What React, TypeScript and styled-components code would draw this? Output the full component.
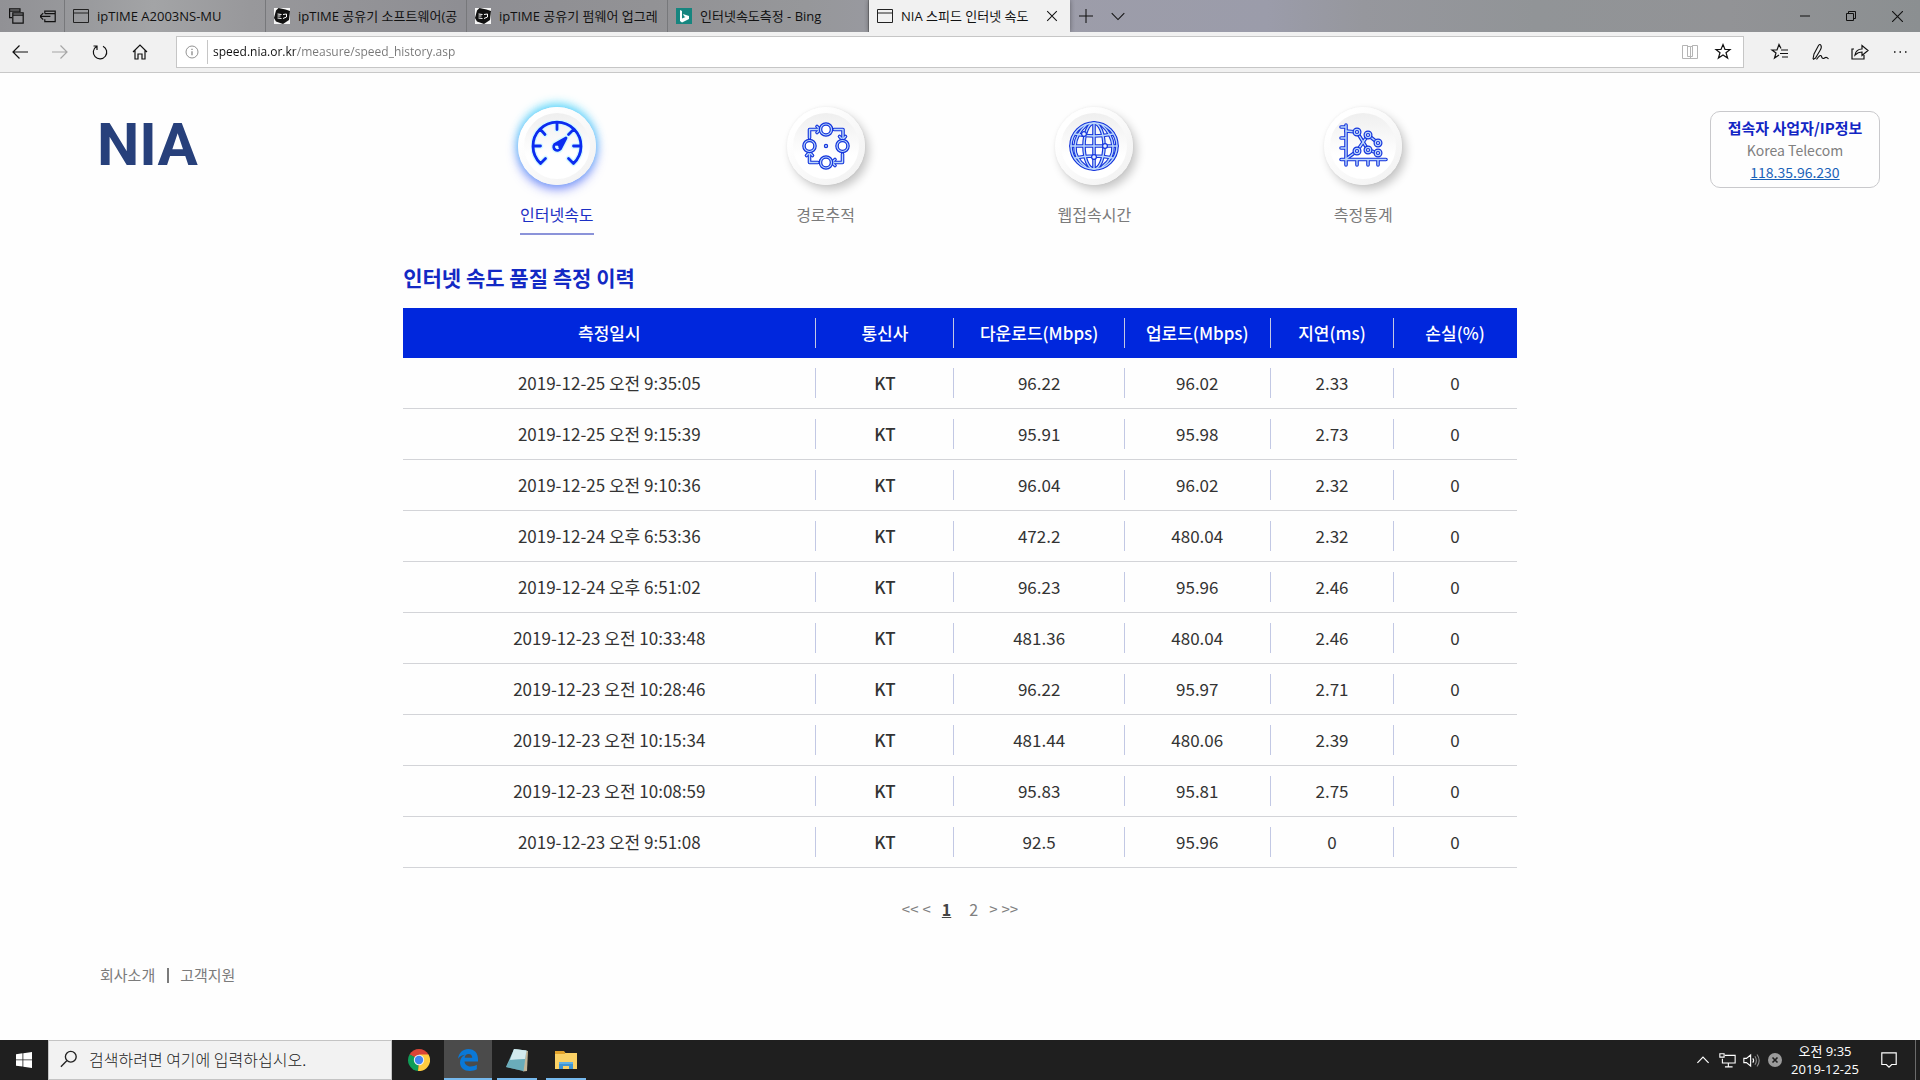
import React from "react";
import styled, { createGlobalStyle, css } from "styled-components";

const uiFont = `"Open Sans", "Noto Sans CJK KR", sans-serif`;
const pageFont = `"Noto Sans CJK KR", "Noto Sans", sans-serif`;

const GlobalStyle = createGlobalStyle`
  *, *::before, *::after { box-sizing: border-box; }
  body { margin: 0; background: #fefefe; font-family: ${pageFont}; }
  button { font: inherit; color: inherit; background: none; border: 0; padding: 0; }
  a { color: inherit; text-decoration: none; }
  svg { display: block; flex: none; }
`;

const Screen = styled.div`
  min-height: 100vh;
  display: flex;
  flex-direction: column;
`;

/* ---------- browser chrome ---------- */

const TabStrip = styled.div`
  height: 32px;
  display: flex;
  align-items: stretch;
  font-family: ${uiFont};
  font-size: 13px;
  color: #111;
  background: linear-gradient(
    90deg,
    #919195 0%, #98999c 4%, #a3a4a6 8%, #98989b 13%, #8e8e93 24%,
    #929295 34%, #96979a 42%, #9d9da9 52%, #9b9caa 66%, #96979d 71%,
    #919497 80%, #929396 90%, #8b8f91 100%
  );
`;

const StripTools = styled.div`
  width: 65px;
  display: flex;
  align-items: center;
  justify-content: space-between;
  padding: 0 8px;
  border-right: 1px solid #77787b;
`;

const Tab = styled.div<{ $active?: boolean }>`
  flex: 0 1 201px;
  min-width: 0;
  display: flex;
  align-items: center;
  padding: 0 8px;
  border-right: 1px solid #77787b;
  ${(p) =>
    p.$active &&
    css`
      background: #f1f1f1;
      border-color: #f1f1f1;
      box-shadow: 0 0 5px rgba(0, 0, 0, 0.4);
      clip-path: inset(0 -5px 0 -5px);
    `}
`;

const TabTitle = styled.button`
  flex: 1;
  min-width: 0;
  display: flex;
  align-items: center;
  gap: 8px;
  text-align: left;
  line-height: 20px;
`;

const TabText = styled.span`
  flex: 1;
  overflow: hidden;
  white-space: nowrap;
`;

const StripButton = styled.button<{ $width: number }>`
  width: ${(p) => p.$width}px;
  display: flex;
  align-items: center;
  justify-content: center;
`;

const Spacer = styled.div`
  flex: 1;
`;

const Toolbar = styled.div`
  height: 41px;
  display: flex;
  align-items: center;
  background: #f1f1f1;
  border-bottom: 1px solid #c8c8c8;
`;

const ToolButton = styled.button`
  width: 40px;
  height: 40px;
  display: flex;
  align-items: center;
  justify-content: center;
`;

const AddressBar = styled.form`
  flex: 1;
  height: 32px;
  margin: 0 16px;
  padding-right: 4px;
  display: flex;
  align-items: center;
  background: #fff;
  border: 1px solid #c6c6c6;
`;

const SiteInfo = styled.button`
  width: 31px;
  height: 24px;
  display: flex;
  align-items: center;
  justify-content: center;
  border-right: 1px solid #c6c6c6;
`;

const AddressInput = styled.input`
  flex: 1;
  min-width: 0;
  height: 24px;
  padding: 0 0 2px;
  margin-left: 5px;
  border: 0;
  outline: 0;
  font-family: ${uiFont};
  font-size: 12px;
  color: #6d6d6d;
  background: linear-gradient(90deg, #111 82px, #767676 82px);
  -webkit-background-clip: text;
  background-clip: text;
  -webkit-text-fill-color: transparent;
`;

const AddressButton = styled.button`
  width: 33px;
  display: flex;
  justify-content: center;
`;

/* ---------- page ---------- */

const Page = styled.main`
  flex: 1;
  background: #fefefe;
`;

const Header = styled.header`
  display: grid;
  grid-template-columns: 22% 56% 22%;
  align-items: start;
  padding-top: 34px;
`;

const Logo = styled.a`
  justify-self: start;
  margin: 8px 0 0 97px;
  font-family: Roboto, sans-serif;
  font-size: 60px;
  font-weight: 700;
  line-height: 60px;
  color: #27407b;
`;

const Menu = styled.nav`
  display: grid;
  grid-template-columns: repeat(4, 1fr);
`;

const MenuItem = styled.a<{ $active?: boolean }>`
  display: flex;
  flex-direction: column;
  align-items: center;
  gap: 17px;
  font-size: 16px;
  line-height: 24px;
  color: ${(p) => (p.$active ? "#1c2fc4" : "#7b7b7b")};
`;

const MenuLabel = styled.span<{ $active?: boolean }>`
  padding-bottom: 7px;
  border-bottom: 2px solid ${(p) => (p.$active ? "#8b93d9" : "transparent")};
`;

const Disc = styled.span<{ $active?: boolean }>`
  width: 78px;
  height: 78px;
  display: flex;
  align-items: center;
  justify-content: center;
  border-radius: 50%;
  border: 6px solid transparent;
  background:
    linear-gradient(#efefef, #fff 65%) padding-box,
    linear-gradient(135deg, #fff 20%, #f1f1f1) border-box;
  box-shadow: ${(p) =>
    p.$active
      ? "0 -4px 10px rgba(40, 215, 250, 0.65), 0 4px 11px rgba(50, 70, 245, 0.65)"
      : "4px 5px 10px rgba(0, 0, 0, 0.22), 0 0 3px rgba(0, 0, 0, 0.06)"};
`;

const IpCard = styled.aside`
  justify-self: end;
  width: 170px;
  margin: 4px 40px 0 0;
  padding: 5px 0 4px;
  border: 1px solid #c9c9cc;
  border-radius: 10px;
  text-align: center;
  line-height: 22px;
  color: #808080;
`;

const IpTitle = styled.strong`
  display: block;
  font-size: 15px;
  font-weight: 700;
  color: #1226c4;
`;

const IpText = styled.span`
  display: block;
  font-size: 14px;
`;

const IpLink = styled.a`
  display: block;
  font-size: 14px;
  color: #1a62b8;
  text-decoration: underline;
`;

const History = styled.section`
  width: 58%;
  margin: 27px auto 0;
`;

const Title = styled.h1`
  margin: 0 0 16px;
  font-size: 21px;
  font-weight: 700;
  line-height: 30px;
  color: #1329c4;
`;

const Table = styled.table`
  width: 100%;
  table-layout: fixed;
  border-collapse: collapse;
  text-align: center;
  font-size: 17px;
`;

const Col = styled.col<{ $share: number }>`
  width: ${(p) => p.$share}%;
`;

const HeadCell = styled.th`
  padding: 10px 0;
  font-weight: 500;
  color: #fff;
  background: #0027dd;
`;

const Row = styled.tr`
  box-shadow: inset 0 -1px 0 #d3d4d8;
`;

const Cell = styled.td<{ $strong?: boolean }>`
  padding: 10px 0 11px;
  color: #333;
  font-weight: ${(p) => (p.$strong ? 500 : 400)};
`;

const CellText = styled.span<{ $last?: boolean }>`
  display: block;
  line-height: 30px;
  white-space: nowrap;
  border-right: 1px solid ${(p) => (p.$last ? "transparent" : "#c2c8e4")};
`;

const Pager = styled.nav`
  display: flex;
  justify-content: center;
  margin-top: 29px;
  font-size: 16px;
  line-height: 24px;
  color: #808080;
`;

const PageStep = styled.a`
  font-size: 15px;
  margin: 0 2px;
`;

const PageNumber = styled.a<{ $current?: boolean }>`
  margin: 0 9px;
  ${(p) =>
    p.$current &&
    css`
      font-weight: 700;
      color: #444;
      text-decoration: underline;
    `}
`;

const Footer = styled.footer`
  display: flex;
  align-items: center;
  margin: 42px 0 0 100px;
  font-size: 15px;
  line-height: 24px;
  color: #7b7b7b;
`;

const FooterRule = styled.span`
  width: 2px;
  height: 15px;
  margin: 0 11px 0 12px;
  background: #7b7b7b;
`;

/* ---------- taskbar ---------- */

const Taskbar = styled.div`
  height: 40px;
  display: flex;
  background: #1f1f1f;
  color: #fff;
  font-family: ${uiFont};
`;

const StartButton = styled.button`
  width: 48px;
  display: flex;
  align-items: center;
  justify-content: center;
`;

const Search = styled.label`
  width: 344px;
  display: flex;
  align-items: center;
  gap: 11px;
  padding: 0 11px 2px;
  color: #222;
  background: #f2f2f2;
  border: 1px solid #c4c4c4;
`;

const SearchInput = styled.input`
  flex: 1;
  min-width: 0;
  padding: 0;
  border: 0;
  outline: 0;
  background: none;
  font-family: ${pageFont};
  font-size: 16px;
  font-weight: 300;
  &::placeholder { color: #222; opacity: 1; }
`;

const Apps = styled.div`
  display: flex;
  gap: 1px;
  padding-left: 3px;
`;

const AppButton = styled.button<{ $state?: "open" | "active" }>`
  width: 48px;
  display: flex;
  align-items: center;
  justify-content: center;
  background:
    linear-gradient(#76b9ed, #76b9ed) bottom center / ${(p) => (p.$state === "active" ? "48px" : p.$state ? "40px" : "0")} 2px no-repeat
    ${(p) => (p.$state === "active" ? "#4b4b4b" : "transparent")};
`;

const TrayButton = styled.button`
  width: 24px;
  display: flex;
  align-items: center;
  justify-content: center;
`;

const Clock = styled.div`
  width: 76px;
  padding-top: 2px;
  text-align: center;
  font-size: 13px;
  line-height: 18px;
`;

const ActionCenter = styled.button`
  width: 52px;
  display: flex;
  align-items: center;
  justify-content: center;
`;

const ShowDesktop = styled.button`
  width: 5px;
  border-left: 1px solid #6b6b6b;
`;

/* ---------- icons ---------- */

type LineProps = { size?: number; color?: string; width?: number; children: React.ReactNode };

/* 20-unit outline icon */
const Line = ({ size = 20, color = "#111", width = 1, children }: LineProps) => (
  <svg width={size} height={size} viewBox="0 0 20 20" fill="none" stroke={color} strokeWidth={width} aria-hidden="true">
    {children}
  </svg>
);

const PageIcon = () => (
  <svg width="16" height="16" viewBox="0 0 16 16" fill="none" stroke="#222" aria-hidden="true">
    <path d="M.5 1.5h15v13H.5zM.5 5h15" />
  </svg>
);

const IpTimeIcon = () => (
  <svg width="16" height="16" viewBox="0 0 16 16" aria-hidden="true">
    <path d="M0 0h16v16H0z" fill="#f4f4f4" />
    <path d="M4.500 0l7 1.500L16 3l-1 9-6 4-7-2.500L0 10l2-7.500z" fill="#111" />
    <path d="M3.500 6l4 .5M3.500 8h3M3.500 10l4 .5M9 6.500l3.500-.5v3L9 10.500" stroke="#fff" fill="none" />
  </svg>
);

const BingIcon = () => (
  <svg width="16" height="16" viewBox="0 0 16 16" aria-hidden="true">
    <path d="M0 0h16v16H0z" fill="#16857f" />
    <path d="M4 2l2 1v7.5L9.500 9 8 8.300 7 6l6 2v3l-7 3.500-2-1.500z" fill="#fff" />
  </svg>
);

const star = "M10 2.500l2 5h5l-4 3.300 1.600 5.200L10 13l-4.600 3L7 10.800 3 7.500h5z";

/* Draws the same strokes twice: a blue outline with a pale core */
const Tube = ({ children }: { children: React.ReactNode }) => (
  <>
    <g stroke="#1434dc" strokeWidth="3.6">{children}</g>
    <g stroke="#bcd8fb" strokeWidth="1.4">{children}</g>
  </>
);

const MenuSvg = ({ children }: { children: React.ReactNode }) => (
  <svg width="52" height="52" viewBox="-26 -26 52 52" fill="none" strokeLinecap="round" strokeLinejoin="round" aria-hidden="true">
    {children}
  </svg>
);

const gauge = (
  <>
    <path d="M-16.500 17.500A24 24 0 1 1 16.500 17.500L11.500 12.500M-16.500 17.500L-11.500 12.500M-23.500 0h7M23.500 0h-7M0-23.500v7M-16.500-16.500l4.500 5M16.500-16.500l-5 5" />
    <path d="M9-8L-2.500-1.500A3.200 3.200 0 1 0 3.300 3z" />
  </>
);

const GaugeIcon = () => (
  <MenuSvg>
    <g stroke="#d4f9ff" strokeWidth="5.500">{gauge}</g>
    <g stroke="#0b2cf0" strokeWidth="2.800">{gauge}</g>
    <path d="M8-7L-2.500-1.500 3 3z" fill="#0b2cf0" />
    <circle cy="1" r="1.500" fill="#dff" />
  </MenuSvg>
);

const RouteIcon = () => (
  <MenuSvg>
    <Tube>
      <path d="M-16.500-8v-8.500h10M8-16.500h9v9M16.500 8v8.500h-9M-8 16.500h-8.500v-9" />
      <path d="M-9-19.500l3 3-3 3M13.500-9.500l3 3 3-3M9 13.500l-3 3 3 3M-19.500 9.500l3-3 3 3" />
    </Tube>
    {[[0, -16.5], [16.5, 0], [0, 16.5], [-16.5, 0]].map(([x, y]) => (
      <g key={`${x},${y}`} stroke="#1434dc" strokeWidth="1.200">
        <circle cx={x} cy={y} r="6.700" fill="#bcd8fb" />
        <circle cx={x} cy={y} r="4.300" fill="#fff" />
      </g>
    ))}
    <circle r="1.600" stroke="#1434dc" strokeWidth="1.200" fill="#bcd8fb" />
  </MenuSvg>
);

const GlobeIcon = () => (
  <MenuSvg>
    <Tube>
      <circle r="23" />
      <path d="M0-23v46M-23 0h46M-19-12q19 4 38 0M-19 12q19-4 38 0" />
      <ellipse rx="10" ry="23" />
      <path d="M-8-21q-10 9-11 21t11 21M8-21q10 9 11 21T8 21" />
    </Tube>
    {[[-10, -12], [11, 0], [0, 11]].map(([x, y]) => (
      <circle key={`${x},${y}`} cx={x} cy={y} r="2.400" stroke="#1434dc" strokeWidth="1.200" fill="#e8f2ff" />
    ))}
  </MenuSvg>
);

const ChartIcon = () => (
  <MenuSvg>
    <Tube>
      <path d="M-17-21v40M-22 13.500h45M-22-19h5M-22-8h5M-22 2h5M-6 14v5M5 14v5M15 14v5" />
      <path d="M-17-15l11 1L5 4l10 3M-17 13l11-8L5-11l10 8" />
    </Tube>
    {[[-6, -14], [5, -11], [15, -3], [-6, 5], [5, 4], [15, 7]].map(([x, y]) => (
      <g key={`${x},${y}`} stroke="#1434dc" strokeWidth="1.200">
        <circle cx={x} cy={y} r="3.900" fill="#bcd8fb" />
        <circle cx={x} cy={y} r="1.500" fill="#fff" />
      </g>
    ))}
  </MenuSvg>
);

const WindowsIcon = () => (
  <svg width="16" height="16" viewBox="0 0 16 16" fill="#fff" aria-hidden="true">
    <path d="M0 2.200L6.500 1.300v6.200H0zM7.300 1.200L16 0v7.500H7.300zM0 8.300h6.500v6.300L0 13.700zM7.300 8.300H16V16l-8.700-1.200z" />
  </svg>
);

const ChromeIcon = () => (
  <svg width="22" height="22" viewBox="0 0 22 22" aria-hidden="true">
    <path d="M11 11L1.500 5.500A11 11 0 0 1 20.500 5.500z" fill="#db4437" />
    <path d="M11 11L1.500 5.500A11 11 0 0 0 10 22z" fill="#0f9d58" />
    <path d="M11 11L20.500 5.500A11 11 0 0 1 10 22z" fill="#ffcd40" />
    <path d="M11 5.500h9.500l-5 8z" fill="#ffcd40" />
    <path d="M1.500 5.500l5 8.500 4-4z" fill="#0f9d58" />
    <circle cx="11" cy="11" r="5.200" fill="#f1f1f1" />
    <circle cx="11" cy="11" r="4.200" fill="#4285f4" />
  </svg>
);

const EdgeIcon = () => (
  <svg width="20" height="22" viewBox="0 0 20 22" aria-hidden="true">
    <path d="M0 9.800C1 3.500 5 0 10.300 0 16.500 0 20 4.300 20 10v2.500H6.500c.3 3.500 3.300 5 6.300 5 2.200 0 4.200-.6 6-1.700v4.500C17 21.400 14.500 22 12 22 6 22 2 18.500 2 13.500c0-3.500 2-6.300 5-7.700C3.800 6 1.500 7.500 0 9.800zM6.700 8.800h7.500c0-2.300-1.300-3.800-3.600-3.800S6.900 6.600 6.700 8.800z" fill="#0a78d7" />
  </svg>
);

const NotepadIcon = () => (
  <svg width="24" height="24" viewBox="0 0 24 24" aria-hidden="true">
    <path d="M9 1l14 2-1 20-4 .5z" fill="#c3b598" />
    <path d="M9 1l12.500 1.500L18.500 23 1 19z" fill="#7fb9c6" />
    <path d="M9 1l12.500 1.500L20 11 5 12z" fill="#d3eaee" />
    <path d="M5 12l15-1-1.500 12L1 19z" fill="#5ba3b3" opacity=".6" />
  </svg>
);

const FolderIcon = () => (
  <svg width="22" height="18" viewBox="0 0 22 18" aria-hidden="true">
    <path d="M0 0h9l1.500 2H0z" fill="#e2a32b" />
    <path d="M0 2h22v16H0z" fill="#fad165" />
    <path d="M0 1h10v2H0z" fill="#e2a32b" />
    <path d="M4 18v-7h14v7h-4v-3H8v3z" fill="#3f94d2" />
    <path d="M4 11h14v2H4z" fill="#5fb0e5" />
  </svg>
);

/* ---------- data ---------- */

const columns = [
  { name: "측정일시", share: 37.1 },
  { name: "통신사", share: 12.4 },
  { name: "다운로드(Mbps)", share: 15.3 },
  { name: "업로드(Mbps)", share: 13.1 },
  { name: "지연(ms)", share: 11.1 },
  { name: "손실(%)", share: 11 },
];

const rows = [
  ["2019-12-25 오전 9:35:05", "KT", "96.22", "96.02", "2.33", "0"],
  ["2019-12-25 오전 9:15:39", "KT", "95.91", "95.98", "2.73", "0"],
  ["2019-12-25 오전 9:10:36", "KT", "96.04", "96.02", "2.32", "0"],
  ["2019-12-24 오후 6:53:36", "KT", "472.2", "480.04", "2.32", "0"],
  ["2019-12-24 오후 6:51:02", "KT", "96.23", "95.96", "2.46", "0"],
  ["2019-12-23 오전 10:33:48", "KT", "481.36", "480.04", "2.46", "0"],
  ["2019-12-23 오전 10:28:46", "KT", "96.22", "95.97", "2.71", "0"],
  ["2019-12-23 오전 10:15:34", "KT", "481.44", "480.06", "2.39", "0"],
  ["2019-12-23 오전 10:08:59", "KT", "95.83", "95.81", "2.75", "0"],
  ["2019-12-23 오전 9:51:08", "KT", "92.5", "95.96", "0", "0"],
];

const menu = [
  { name: "인터넷속도", icon: <GaugeIcon />, active: true },
  { name: "경로추적", icon: <RouteIcon /> },
  { name: "웹접속시간", icon: <GlobeIcon /> },
  { name: "측정통계", icon: <ChartIcon /> },
];

const tabs = [
  { name: "ipTIME A2003NS-MU", icon: <PageIcon /> },
  { name: "ipTIME 공유기 소프트웨어(공", icon: <IpTimeIcon /> },
  { name: "ipTIME 공유기 펌웨어 업그레", icon: <IpTimeIcon /> },
  { name: "인터넷속도측정 - Bing", icon: <BingIcon /> },
];

/* ---------- sections ---------- */

const BrowserChrome = () => (
  <>
    <TabStrip>
      <StripTools>
        <button aria-label="탭 보관함">
          <Line size={16}>
            <path d="M5 12H2V1h13v4M2 4h13M6 6h13v13H6zM6 9h13" strokeWidth="1.500" />
          </Line>
        </button>
        <button aria-label="탭 보관">
          <Line size={16}>
            <path d="M6 7V4h13v13H6v-3M6 7h13M0 10.500h13M4 6.500l-4 4 4 4" strokeWidth="1.500" />
          </Line>
        </button>
      </StripTools>
      {tabs.map((t) => (
        <Tab key={t.name}>
          <TabTitle>
            {t.icon}
            <TabText>{t.name}</TabText>
          </TabTitle>
        </Tab>
      ))}
      <Tab $active>
        <TabTitle>
          <PageIcon />
          <TabText>NIA 스피드 인터넷 속도</TabText>
        </TabTitle>
        <StripButton $width={18} aria-label="탭 닫기">
          <Line size={12}><path d="M2 2l16 16M18 2L2 18" strokeWidth="1.700" /></Line>
        </StripButton>
      </Tab>
      <StripButton $width={32} aria-label="새 탭">
        <Line size={14}><path d="M10 0v20M0 10h20" strokeWidth="1.500" /></Line>
      </StripButton>
      <StripButton $width={32} aria-label="탭 미리 보기">
        <Line size={14}><path d="M1 6l9 9 9-9" strokeWidth="1.500" /></Line>
      </StripButton>
      <Spacer />
      <StripButton $width={46} aria-label="최소화">
        <Line size={10}><path d="M0 10h20" strokeWidth="2" /></Line>
      </StripButton>
      <StripButton $width={46} aria-label="이전 크기로">
        <Line size={10}><path d="M1 5h14v14H1zM5 5V1h14v14h-4" strokeWidth="2" /></Line>
      </StripButton>
      <StripButton $width={46} aria-label="닫기">
        <Line size={11}><path d="M0 0l20 20M20 0L0 20" strokeWidth="2" /></Line>
      </StripButton>
    </TabStrip>
    <Toolbar>
      <ToolButton aria-label="뒤로"><Line><path d="M18 10H3M9.500 3.500L3 10l6.500 6.500" strokeWidth="1.200" /></Line></ToolButton>
      <ToolButton aria-label="앞으로"><Line color="#a6a6a6"><path d="M2 10h15M10.500 3.500L17 10l-6.500 6.500" strokeWidth="1.200" /></Line></ToolButton>
      <ToolButton aria-label="새로 고침"><Line><path d="M13 4.200A6.700 6.700 0 1 1 6.500 4.500M3.500 4h3.500v4" strokeWidth="1.200" /></Line></ToolButton>
      <ToolButton aria-label="홈"><Line><path d="M3 10l7-7 7 7M5 8.500V17h3v-5h4v5h3V8.500" strokeWidth="1.200" /></Line></ToolButton>
      <AddressBar>
        <SiteInfo type="button" aria-label="사이트 정보">
          <Line size={16} color="#777"><circle cx="10" cy="10" r="7.500" /><path d="M10 9v5M10 6v1.500" strokeWidth="1.400" /></Line>
        </SiteInfo>
        <AddressInput aria-label="주소" defaultValue="speed.nia.or.kr/measure/speed_history.asp" />
        <AddressButton type="button" aria-label="읽기용 보기">
          <Line color="#b5b5b5"><path d="M10.500 4.500h-3v-1h-5v13h15v-13h-5v1h-2v12M7.500 3.500v11h3M12.500 3.500v11h-2" /></Line>
        </AddressButton>
        <AddressButton type="button" aria-label="즐겨찾기에 추가">
          <Line><path d={star} strokeWidth="1.200" /></Line>
        </AddressButton>
      </AddressBar>
      <ToolButton aria-label="즐겨찾기"><Line><path d="M11 6.500L9 2.500 7 8H2l4 3-1.500 5L9 13M11 8h7M10 11.500h8M12 15h6" strokeWidth="1.200" /></Line></ToolButton>
      <ToolButton aria-label="메모 추가"><Line><path d="M3 17L4 12 8.500 3.500q1.500-2 2.500 0t-1 5L5.500 16 3 17.500M6.500 17.500q4-6 5-3t3 1.500 4 1" strokeWidth="1.100" /></Line></ToolButton>
      <ToolButton aria-label="공유"><Line><path d="M4 7H2v10h12v-4M5 13q1-6 7-6V3.500l6 5-6 5V10q-4 0-7 3z" strokeWidth="1.200" /></Line></ToolButton>
      <ToolButton aria-label="설정 및 기타"><Line><path d="M4 10h1.500M9.500 10H11M15 10h1.500" strokeWidth="1.500" /></Line></ToolButton>
    </Toolbar>
  </>
);

const SpeedHistory = () => (
  <History>
    <Title>인터넷 속도 품질 측정 이력</Title>
    <Table>
      <colgroup>{columns.map((c) => <Col key={c.name} $share={c.share} />)}</colgroup>
      <thead>
        <tr>
          {columns.map((c, i) => (
            <HeadCell key={c.name} scope="col"><CellText $last={i === 5}>{c.name}</CellText></HeadCell>
          ))}
        </tr>
      </thead>
      <tbody>
        {rows.map((r) => (
          <Row key={r[0]}>
            {r.map((v, i) => (
              <Cell key={i} $strong={i === 1}><CellText $last={i === 5}>{v}</CellText></Cell>
            ))}
          </Row>
        ))}
      </tbody>
    </Table>
    <Pager aria-label="페이지">
      <PageStep href="#">&lt;&lt;</PageStep>
      <PageStep href="#">&lt;</PageStep>
      <PageNumber href="#" $current>1</PageNumber>
      <PageNumber href="#">2</PageNumber>
      <PageStep href="#">&gt;</PageStep>
      <PageStep href="#">&gt;&gt;</PageStep>
    </Pager>
  </History>
);

const WindowsTaskbar = () => (
  <Taskbar>
    <StartButton aria-label="시작"><WindowsIcon /></StartButton>
    <Search>
      <Line size={18} color="#222"><circle cx="12" cy="7.500" r="6" strokeWidth="1.500" /><path d="M7.500 12L1 18.500" strokeWidth="1.500" /></Line>
      <SearchInput aria-label="검색" placeholder="검색하려면 여기에 입력하십시오." />
    </Search>
    <Apps>
      <AppButton aria-label="Chrome"><ChromeIcon /></AppButton>
      <AppButton aria-label="Edge" $state="active"><EdgeIcon /></AppButton>
      <AppButton aria-label="메모장" $state="open"><NotepadIcon /></AppButton>
      <AppButton aria-label="파일 탐색기" $state="open"><FolderIcon /></AppButton>
    </Apps>
    <Spacer />
    <TrayButton aria-label="숨겨진 아이콘 표시"><Line size={14} color="#fff"><path d="M2 14l8-8 8 8" strokeWidth="1.700" /></Line></TrayButton>
    <TrayButton aria-label="네트워크"><Line size={17} color="#fff"><path d="M7 4h12v9H4V8M1 2h5v4H1zM11 13v4M7 17.500h9" strokeWidth="1.300" /></Line></TrayButton>
    <TrayButton aria-label="볼륨">
      <Line size={17} color="#fff">
        <path d="M1 7.500h3l5-4v13l-5-4H1zM11.500 7.500q2 2.500 0 5" strokeWidth="1.300" />
        <path d="M14 5q3.500 5 0 10M16.500 3q5 7 0 14" stroke="#8a8a8a" strokeWidth="1.300" />
      </Line>
    </TrayButton>
    <TrayButton aria-label="상태">
      <svg width="14" height="14" viewBox="0 0 14 14" aria-hidden="true">
        <circle cx="7" cy="7" r="7" fill="#9b9b9b" />
        <path d="M4.500 4.500l5 5M9.500 4.500l-5 5" stroke="#1f1f1f" strokeWidth="1.600" />
      </svg>
    </TrayButton>
    <Clock>오전 9:35<br />2019-12-25</Clock>
    <ActionCenter aria-label="알림 센터">
      <Line size={18} color="#fff"><path d="M2 2h16v13h-5l-3 3-3-3H2z" strokeWidth="1.300" /></Line>
    </ActionCenter>
    <ShowDesktop aria-label="바탕 화면 보기" />
  </Taskbar>
);

export default function App() {
  return (
    <Screen>
      <GlobalStyle />
      <BrowserChrome />
      <Page>
        <Header>
          <Logo href="#">NIA</Logo>
          <Menu>
            {menu.map((m) => (
              <MenuItem key={m.name} href="#" $active={m.active}>
                <Disc $active={m.active}>{m.icon}</Disc>
                <MenuLabel $active={m.active}>{m.name}</MenuLabel>
              </MenuItem>
            ))}
          </Menu>
          <IpCard>
            <IpTitle>접속자 사업자/IP정보</IpTitle>
            <IpText>Korea Telecom</IpText>
            <IpLink href="#">118.35.96.230</IpLink>
          </IpCard>
        </Header>
        <SpeedHistory />
        <Footer>
          <a href="#">회사소개</a>
          <FooterRule />
          <a href="#">고객지원</a>
        </Footer>
      </Page>
      <WindowsTaskbar />
    </Screen>
  );
}
